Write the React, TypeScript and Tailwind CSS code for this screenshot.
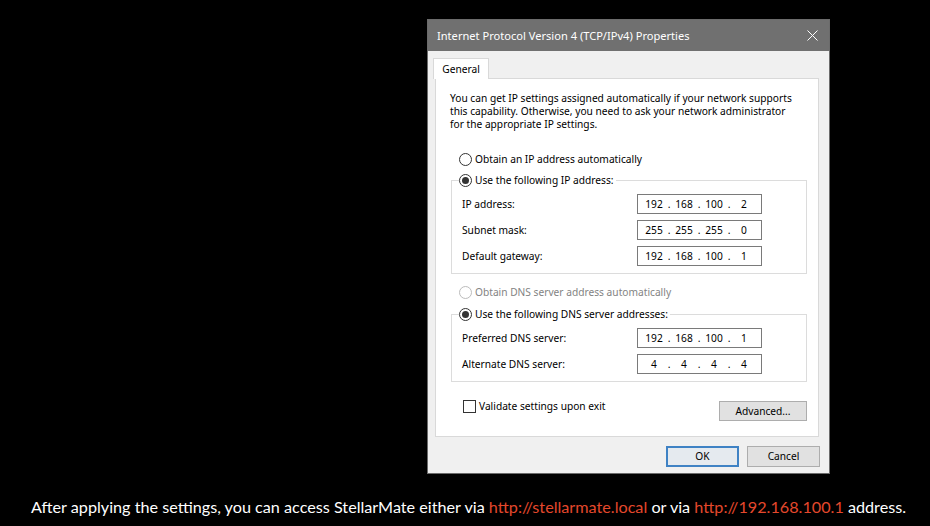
import React from "react";

const FONT = { fontFamily: '"Noto Sans", "Open Sans", sans-serif' };

function Radio({ checked, disabled }: { checked?: boolean; disabled?: boolean }) {
  return (
    <span
      className={`flex h-[13px] w-[13px] shrink-0 items-center justify-center rounded-full border bg-white ${
        disabled ? "border-[#bcbcbc]" : "border-[#333333]"
      }`}
    >
      {checked && <span className="h-[7px] w-[7px] rounded-full bg-[#333333]" />}
    </span>
  );
}

function IpBox({ parts }: { parts: string[] }) {
  return (
    <div className="flex h-[20px] w-[125px] items-center border border-[#7a7a7a] bg-white pl-[3px] text-[10.2px] leading-[13px] text-black">
      {parts.map((p, i) => (
        <React.Fragment key={i}>
          {i > 0 && <span className="w-[4px] text-center">.</span>}
          <span className="w-[26px] text-center">{p}</span>
        </React.Fragment>
      ))}
    </div>
  );
}

function Row({ label, parts }: { label: string; parts: string[] }) {
  return (
    <div className="flex items-center">
      <span className="w-[175px] text-[10.2px] leading-[13px]">{label}</span>
      <IpBox parts={parts} />
    </div>
  );
}

function Group({
  legend,
  rows,
  className,
}: {
  legend: string;
  rows: { label: string; parts: string[] }[];
  className?: string;
}) {
  return (
    <fieldset className={`ml-[1px] border border-[#dcdcdc] pl-[10px] ${className ?? ""}`}>
      <legend className="-ml-[3px] flex items-center gap-[3px] pr-[2px] text-[10.2px] leading-[13px]">
        <Radio checked />
        <span>{legend}</span>
      </legend>
      <div className="flex flex-col gap-[6px] pt-[7px] pb-[7px]">
        {rows.map((r) => (
          <Row key={r.label} label={r.label} parts={r.parts} />
        ))}
      </div>
    </fieldset>
  );
}

export default function App() {
  return (
    <div className="flex h-[526px] w-[930px] flex-col overflow-hidden bg-black" style={FONT}>
      <div className="ml-[427px] mt-[19px] flex h-[455px] w-[403px] flex-col border border-[#6b6b6b] bg-[#f0f0f0] text-black">
        {/* title bar */}
        <div className="flex h-[31px] shrink-0 items-center justify-between bg-[#707070] pl-[9px] pr-[11px] text-white">
          <span className="text-[11.1px] leading-[15px]">Internet Protocol Version 4 (TCP/IPv4) Properties</span>
          <svg width="11" height="11" viewBox="0 0 11 11" className="mb-[1px]">
            <path d="M0.5 0.5 L10.5 10.5 M10.5 0.5 L0.5 10.5" stroke="white" strokeWidth="1" fill="none" />
          </svg>
        </div>

        {/* tab */}
        <div className="relative z-10 ml-[5px] mt-[7px] -mb-[1px] flex h-[21px] w-[56px] items-center justify-center border border-b-0 border-[#d9d9d9] bg-white text-[10.2px] leading-[13px]">
          General
        </div>

        {/* panel */}
        <div className="ml-[7px] mr-[10px] flex h-[359px] flex-col border border-[#d9d9d9] bg-white pl-[14px] pr-[11px] pt-[13px]">
          <p className="whitespace-nowrap text-[10.2px] leading-[13px]">
            You can get IP settings assigned automatically if your network supports
            <br />
            this capability. Otherwise, you need to ask your network administrator
            <br />
            for the appropriate IP settings.
          </p>

          <div className="ml-[9px] mt-[22px] flex items-center gap-[3px] text-[10.2px] leading-[13px]">
            <Radio />
            <span>Obtain an IP address automatically</span>
          </div>

          <Group
            className="mt-[8px]"
            legend="Use the following IP address:"
            rows={[
              { label: "IP address:", parts: ["192", "168", "100", "2"] },
              { label: "Subnet mask:", parts: ["255", "255", "255", "0"] },
              { label: "Default gateway:", parts: ["192", "168", "100", "1"] },
            ]}
          />

          <div className="ml-[9px] mt-[12px] flex items-center gap-[3px] text-[10.2px] leading-[13px] text-[#838383]">
            <Radio disabled />
            <span>Obtain DNS server address automatically</span>
          </div>

          <Group
            className="mt-[9px]"
            legend="Use the following DNS server addresses:"
            rows={[
              { label: "Preferred DNS server:", parts: ["192", "168", "100", "1"] },
              { label: "Alternate DNS server:", parts: ["4", "4", "4", "4"] },
            ]}
          />

          <div className="mt-[18px] flex items-start justify-between">
            <div className="ml-[13px] flex items-center gap-[3px] text-[10.2px] leading-[13px]">
              <span className="h-[13px] w-[13px] border border-[#333333] bg-white" />
              <span>Validate settings upon exit</span>
            </div>
            <div className="mt-[1px] flex h-[20px] w-[88px] items-center justify-center border border-[#adadad] bg-[#e1e1e1] text-[10.2px] leading-[13px]">
              Advanced...
            </div>
          </div>
        </div>

        {/* buttons */}
        <div className="mr-[9px] mt-[9px] flex justify-end gap-[8px]">
          <div className="flex h-[21px] w-[73px] items-center justify-center border-2 border-[#3f82c4] bg-[#e5eaef] text-[10.2px] leading-[13px]">
            OK
          </div>
          <div className="flex h-[21px] w-[73px] items-center justify-center border border-[#adadad] bg-[#e1e1e1] text-[10.2px] leading-[13px]">
            Cancel
          </div>
        </div>
      </div>

      <div className="mt-[24px] pl-[7px] text-center text-[16.2px] leading-[18px] text-white" style={{ fontFamily: "Lato, sans-serif" }}>
        After applying the settings, you can access StellarMate either via{" "}
        <span className="text-[#e4482c]">http://stellarmate.local</span> or via{" "}
        <span className="text-[#e4482c]">http://192.168.100.1</span> address.
      </div>
    </div>
  );
}
